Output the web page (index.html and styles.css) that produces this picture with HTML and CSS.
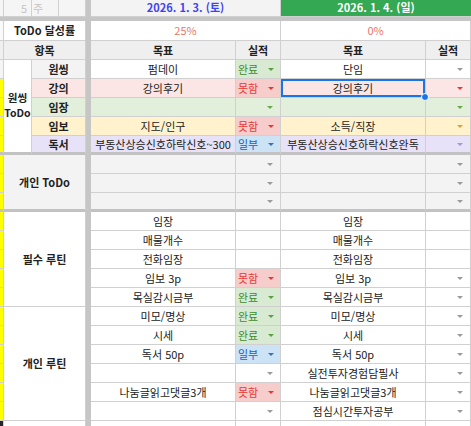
FILE: index.html
```html
<!DOCTYPE html>
<html lang="ko">
<head>
<meta charset="utf-8">
<title>주간 ToDo</title>
<link rel="stylesheet" href="styles.css">
</head>
<body>
<div class="sheet">
  <div class="vdiv"></div>
  <div class="hdiv"></div>

  <!-- week header -->
  <div class="c a hd0"></div>
  <div class="c hd0 wk num">5</div>
  <div class="c hd0 wk unit">주</div>
  <div class="c hd0"></div>
  <div class="c hd0 date s2">2026. 1. 3. (토)</div>
  <div class="c date-today s2">2026. 1. 4. (일)</div>

  <!-- ToDo rate -->
  <div class="c a a-light"></div>
  <div class="c s3 b">ToDo 달성률</div>
  <div class="c s2 rate">25%</div>
  <div class="c s2 rate">0%</div>

  <!-- column header -->
  <div class="c a hd"></div>
  <div class="c s3 hd b">항목</div>
  <div class="c hd b">목표</div>
  <div class="c hd b">실적</div>
  <div class="c hd b">목표</div>
  <div class="c hd b">실적</div>

  <!-- 원씽 ToDo -->
  <div class="c a hd0"></div>
  <div class="c r5 b tb onething"><span class="line">원씽</span><span class="line">ToDo</span></div>
  <div class="c s2 b g0">원씽</div>
  <div class="c">펌데이</div>
  <div class="c st done"><span>완료</span><i class="arr"></i></div>
  <div class="c">단임</div>
  <div class="c st-only"><i class="arr"></i></div>

  <div class="c a y"></div>
  <div class="c s2 b pink">강의</div>
  <div class="c pink">강의후기</div>
  <div class="c st fail"><span>못함</span><i class="arr"></i></div>
  <div class="c pink sel">강의후기</div>
  <div class="c st-only pink red-arr"><i class="arr"></i></div>

  <div class="c a y"></div>
  <div class="c s2 b green">임장</div>
  <div class="c green"></div>
  <div class="c st-only green green-arr"><i class="arr"></i></div>
  <div class="c green"></div>
  <div class="c st-only green green-arr"><i class="arr"></i></div>

  <div class="c a y"></div>
  <div class="c s2 b yel">임보</div>
  <div class="c yel">지도/인구</div>
  <div class="c st fail"><span>못함</span><i class="arr"></i></div>
  <div class="c yel">소득/직장</div>
  <div class="c st-only yel gold-arr"><i class="arr"></i></div>

  <div class="c a y tb"></div>
  <div class="c s2 b lav tb">독서</div>
  <div class="c lav tb over">부동산상승신호하락신호~300</div>
  <div class="c st part tb"><span>일부</span><i class="arr"></i></div>
  <div class="c lav tb">부동산상승신호하락신호완독</div>
  <div class="c st-only lav lav-arr tb"><i class="arr"></i></div>

  <!-- 개인 ToDo -->
  <div class="c a y"></div>
  <div class="c s3 r3 b g0 tb">개인 ToDo</div>
  <div class="c g0"></div>
  <div class="c st-only g0"><i class="arr"></i></div>
  <div class="c g0"></div>
  <div class="c st-only g0"><i class="arr"></i></div>

  <div class="c a y"></div>
  <div class="c g0"></div>
  <div class="c st-only g0"><i class="arr"></i></div>
  <div class="c g0"></div>
  <div class="c st-only g0"><i class="arr"></i></div>

  <div class="c a y tb"></div>
  <div class="c g0 tb"></div>
  <div class="c st-only g0 tb"><i class="arr"></i></div>
  <div class="c g0 tb"></div>
  <div class="c st-only g0 tb"><i class="arr"></i></div>

  <!-- 필수 루틴 -->
  <div class="c a y"></div>
  <div class="c s3 r5 b">필수 루틴</div>
  <div class="c">임장</div>
  <div class="c"></div>
  <div class="c">임장</div>
  <div class="c"></div>

  <div class="c a y"></div>
  <div class="c">매물개수</div>
  <div class="c"></div>
  <div class="c">매물개수</div>
  <div class="c"></div>

  <div class="c a y"></div>
  <div class="c">전화임장</div>
  <div class="c"></div>
  <div class="c">전화임장</div>
  <div class="c"></div>

  <div class="c a y"></div>
  <div class="c">임보 3p</div>
  <div class="c st fail"><span>못함</span><i class="arr"></i></div>
  <div class="c">임보 3p</div>
  <div class="c st-only"><i class="arr"></i></div>

  <div class="c a y"></div>
  <div class="c">목실감시금부</div>
  <div class="c st done"><span>완료</span><i class="arr"></i></div>
  <div class="c">목실감시금부</div>
  <div class="c st-only"><i class="arr"></i></div>

  <!-- 개인 루틴 -->
  <div class="c a y"></div>
  <div class="c s3 r6 b">개인 루틴</div>
  <div class="c">미모/명상</div>
  <div class="c st done"><span>완료</span><i class="arr"></i></div>
  <div class="c">미모/명상</div>
  <div class="c st-only"><i class="arr"></i></div>

  <div class="c a y"></div>
  <div class="c">시세</div>
  <div class="c st done"><span>완료</span><i class="arr"></i></div>
  <div class="c">시세</div>
  <div class="c st-only"><i class="arr"></i></div>

  <div class="c a y"></div>
  <div class="c">독서 50p</div>
  <div class="c st part"><span>일부</span><i class="arr"></i></div>
  <div class="c">독서 50p</div>
  <div class="c st-only"><i class="arr"></i></div>

  <div class="c a y"></div>
  <div class="c"></div>
  <div class="c st-only"><i class="arr"></i></div>
  <div class="c">실전투자경험담필사</div>
  <div class="c st-only"><i class="arr"></i></div>

  <div class="c a y"></div>
  <div class="c">나눔글읽고댓글3개</div>
  <div class="c st fail"><span>못함</span><i class="arr"></i></div>
  <div class="c">나눔글읽고댓글3개</div>
  <div class="c st-only"><i class="arr"></i></div>

  <div class="c a y"></div>
  <div class="c"></div>
  <div class="c st-only"><i class="arr"></i></div>
  <div class="c">점심시간투자공부</div>
  <div class="c st-only"><i class="arr"></i></div>

  <!-- trailing row -->
  <div class="c a dark"></div>
  <div class="c s3"></div>
  <div class="c"></div>
  <div class="c"></div>
  <div class="c"></div>
  <div class="c"></div>
</div>
</body>
</html>
```

FILE: styles.css
```css
html, body {
  margin: 0;
  padding: 0;
  background: #ffffff;
  overflow: hidden;
}

.sheet {
  display: grid;
  grid-template-columns: 4px 28px 27px 27px 5px 145px 45px 145px 45px;
  grid-template-rows: 17px 4px 20px 19px repeat(20, 19px);
  font-family: "Noto Sans CJK KR", "Noto Sans", sans-serif;
  font-size: 11px;
  color: #222222;
  width: 471px;
}

.vdiv {
  grid-column: 5;
  grid-row: 1 / -1;
  background: #c6c6c6;
}

.hdiv {
  grid-column: 1 / -1;
  grid-row: 2;
  background: #c6c6c6;
}

.c {
  box-sizing: border-box;
  border-right: 1px solid #d0d0d0;
  border-bottom: 1px solid #d0d0d0;
  display: flex;
  align-items: center;
  justify-content: center;
  overflow: hidden;
  white-space: nowrap;
  line-height: 1;
  min-width: 0;
  background: #ffffff;
}

.s2 { grid-column: span 2; }
.s3 { grid-column: span 3; }
.r3 { grid-row: span 3; }
.r5 { grid-row: span 5; }
.r6 { grid-row: span 6; }

.b { font-weight: 700; }
.tb { border-bottom: 3px solid #c2c2c2; }

/* left strip */
.a { background: #f3f3f3; }
.a-light { background: #fafafa; }
.y { background: #ffff00; }
.dark { background: #262626; }

/* header rows */
.hd0 { background: #f5f5f5; }
.hd { background: #efefef; }
.wk { color: #c4c4c4; font-size: 11px; }
.num { justify-content: flex-end; padding-right: 4px; }
.unit { justify-content: flex-start; padding-left: 1px; }
.date { color: #3f44f2; font-weight: 700; background: #f3f3f3; padding-bottom: 1px; }
.date-today {
  background: #34a853;
  color: #ffffff;
  font-weight: 700;
  border-right: none;
  padding-bottom: 1px;
}
.rate { color: #e8776a; }

.onething {
  flex-direction: column;
  padding-bottom: 2px;
  font-size: 10.5px;
}
.onething .line {
  display: block;
  line-height: 15.5px;
  height: 15.5px;
}

/* row tints */
.g0 { background: #f3f3f3; }
.pink { background: #fce6e5; }
.green { background: #e2efda; }
.yel { background: #fff2cc; }
.lav { background: #e7e2f7; }

.over { justify-content: center; }

/* status cells */
.st {
  justify-content: space-between;
  padding: 0 6px 0 2px;
}
.st-only {
  justify-content: flex-end;
  padding-right: 7px;
}

.arr {
  display: block;
  width: 0;
  height: 0;
  border-left: 3px solid transparent;
  border-right: 3px solid transparent;
  border-top: 3px solid #9a9a9a;
}

.done { background: #d9ead3; color: #3f8a2c; }
.done .arr { border-top-color: #5c9e45; }
.fail { background: #f6cdcb; color: #e53935; }
.fail .arr { border-top-color: #e53935; }
.part { background: #cce2f5; color: #1f5fbf; }
.part .arr { border-top-color: #3a6fc2; }

.red-arr .arr { border-top-color: #e53935; }
.green-arr .arr { border-top-color: #6aa84f; }
.gold-arr .arr { border-top-color: #d4a72c; }
.lav-arr .arr { border-top-color: #a29ad8; }

/* selected cell */
.sel {
  position: relative;
  z-index: 2;
  overflow: visible;
  box-shadow: inset 0 0 0 2px #1a73e8;
}
.sel::after {
  content: "";
  position: absolute;
  right: -4px;
  bottom: -4px;
  width: 6px;
  height: 6px;
  border-radius: 50%;
  background: #1a73e8;
  border: 1px solid #ffffff;
}
```
